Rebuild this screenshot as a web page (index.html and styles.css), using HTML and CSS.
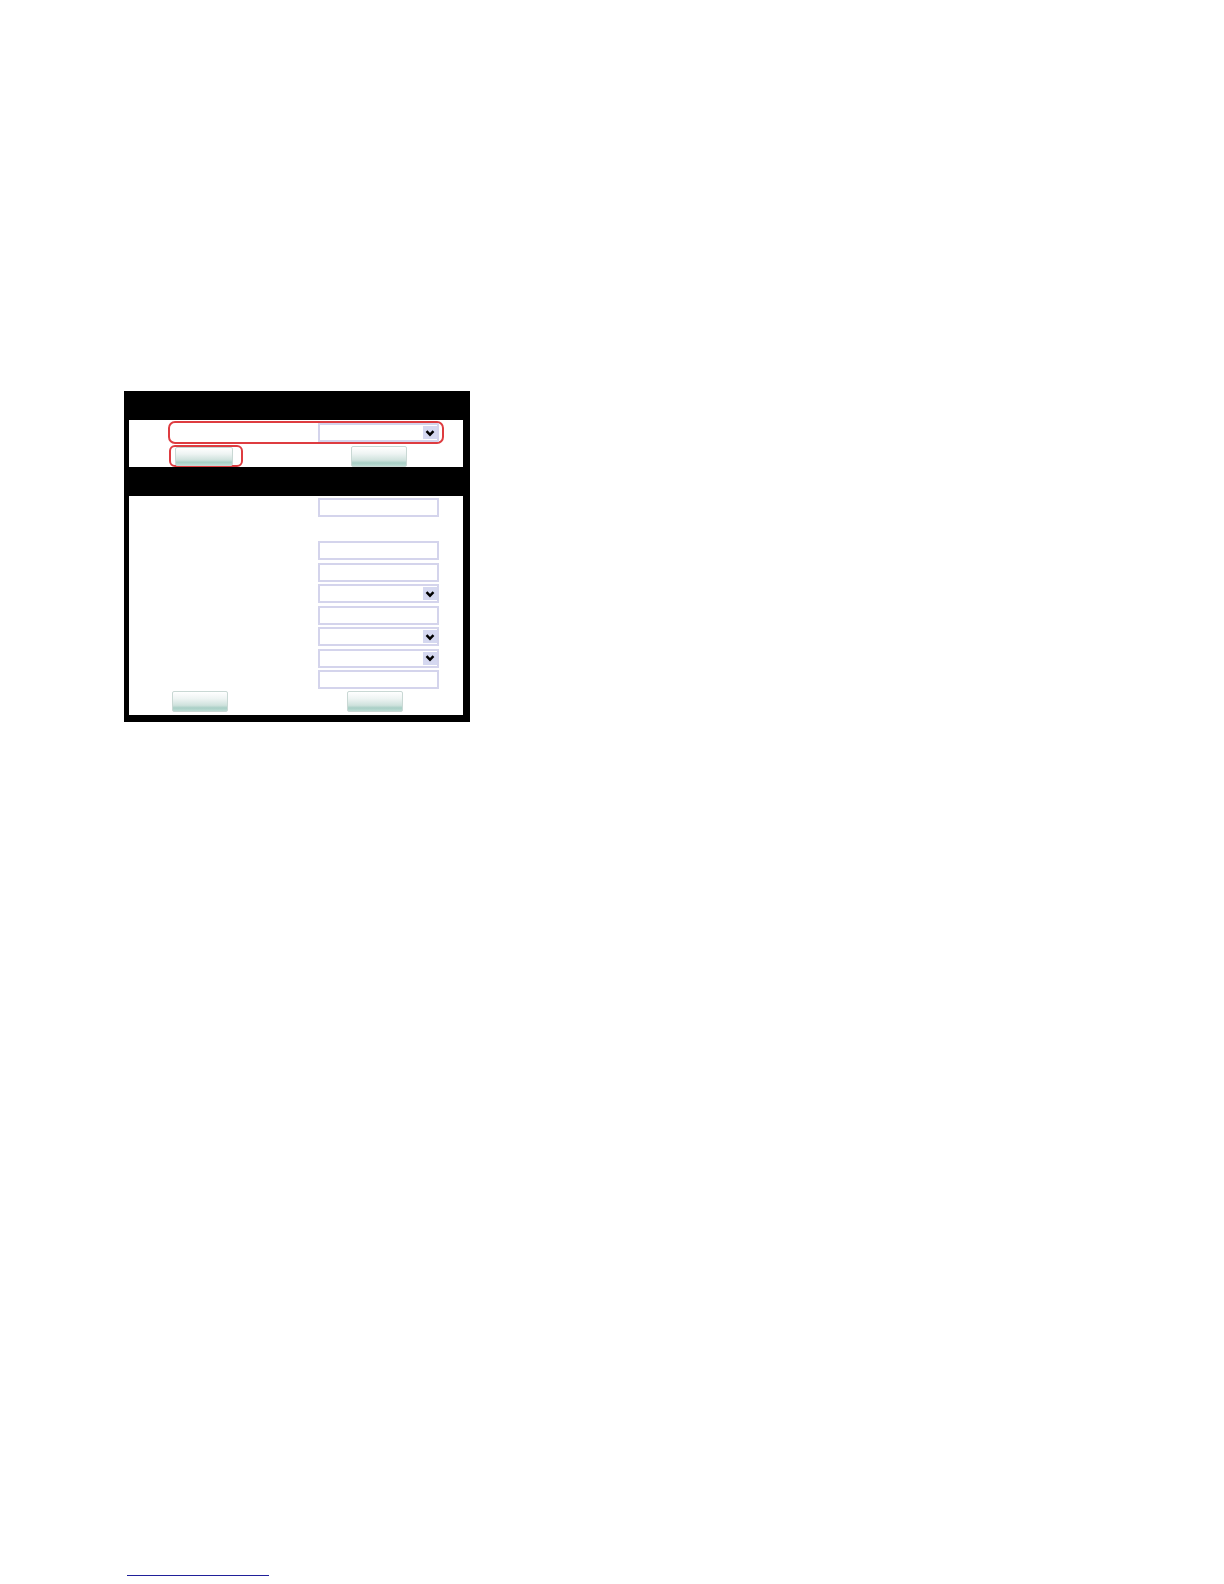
FILE: index.html
```html
<!DOCTYPE html>
<html lang="en">
<head>
<meta charset="utf-8">
<title>Form</title>
<link rel="stylesheet" href="styles.css">
</head>
<body>
<div class="page">
  <div class="panel">
    <div class="panel-head"></div>
    <div class="panel-top">
      <div class="hl-row">
        <div class="select">
          <span class="select-btn"><svg viewBox="0 0 10 10" width="10" height="10"><path d="M1.5 3.2 L5 6.7 L8.5 3.2" fill="none" stroke="#000" stroke-width="2.4"/></svg></span>
        </div>
      </div>
      <div class="btn-row">
        <div class="hl-btn"><button class="btn" type="button"></button></div>
        <button class="btn btn-tall" type="button"></button>
      </div>
    </div>
    <div class="panel-head"></div>
    <div class="panel-body">
      <div class="form-grid">
        <span class="label"></span><input class="field" type="text">
        <span class="label"></span><span class="empty"></span>
        <span class="label"></span><input class="field" type="text">
        <span class="label"></span><input class="field" type="text">
        <span class="label"></span>
        <div class="select"><span class="select-btn"><svg viewBox="0 0 10 10" width="10" height="10"><path d="M1.5 3.2 L5 6.7 L8.5 3.2" fill="none" stroke="#000" stroke-width="2.4"/></svg></span></div>
        <span class="label"></span><input class="field" type="text">
        <span class="label"></span>
        <div class="select"><span class="select-btn"><svg viewBox="0 0 10 10" width="10" height="10"><path d="M1.5 3.2 L5 6.7 L8.5 3.2" fill="none" stroke="#000" stroke-width="2.4"/></svg></span></div>
        <span class="label"></span>
        <div class="select"><span class="select-btn"><svg viewBox="0 0 10 10" width="10" height="10"><path d="M1.5 3.2 L5 6.7 L8.5 3.2" fill="none" stroke="#000" stroke-width="2.4"/></svg></span></div>
        <span class="label"></span><input class="field" type="text">
      </div>
      <div class="foot-row">
        <button class="btn btn-tall" type="button"></button>
        <button class="btn btn-tall" type="button"></button>
      </div>
    </div>
  </div>
  <div class="footnote-rule"></div>
</div>
</body>
</html>
```

FILE: styles.css
```css
html, body {
  margin: 0;
  padding: 0;
  background: #ffffff;
  font-family: "Liberation Sans", Arial, sans-serif;
}

.page {
  padding: 391px 0 0 124px;
  height: 1193px;
}

.panel {
  width: 346px;
  background: #000000;
  padding: 0 7px 7px 5px;
  box-sizing: border-box;
}

.panel-head {
  height: 29px;
}

.panel-top {
  background: #ffffff;
  height: 47px;
  padding-top: 1px;
  box-sizing: border-box;
}

.hl-row {
  margin-left: 39px;
  width: 276px;
  height: 23px;
  border: 2px solid #de3c40;
  border-radius: 7px;
  box-sizing: border-box;
  display: flex;
  justify-content: flex-end;
  align-items: center;
  padding-right: 3px;
}

.select {
  width: 121px;
  height: 19px;
  border: 2px solid #d4d4ec;
  box-sizing: border-box;
  background: #ffffff;
  display: flex;
  justify-content: flex-end;
  align-items: center;
}

.select-btn {
  width: 14px;
  height: 13px;
  background: #d5d8f0;
  display: flex;
  align-items: center;
  justify-content: center;
}

.btn-row {
  display: flex;
  align-items: flex-end;
  margin-left: 40px;
  margin-top: 1px;
  gap: 108px;
}

.hl-btn {
  width: 74px;
  height: 22px;
  border: 2px solid #de3c40;
  border-radius: 6px;
  box-sizing: border-box;
  padding: 0 0 0 4px;
  display: flex;
  align-items: center;
}

.btn {
  display: block;
  width: 58px;
  height: 19px;
  padding: 0;
  margin: 0;
  border: 1px solid #c9d8d4;
  border-radius: 2px;
  box-sizing: border-box;
  background: linear-gradient(#ffffff 0%, #eef4f3 35%, #cfe2dd 70%, #a9cfc6 84%, #bcdcd4 100%);
}

.btn-tall {
  width: 56px;
  height: 21px;
}

.panel-body {
  background: #ffffff;
  height: 219px;
  padding-top: 2px;
  box-sizing: border-box;
}

.form-grid {
  display: grid;
  grid-template-columns: 189px 121px;
  grid-auto-rows: 19px;
  row-gap: 2.5px;
}

.field {
  width: 121px;
  height: 19px;
  margin: 0;
  padding: 0;
  border: 2px solid #d4d4ec;
  box-sizing: border-box;
  background: #ffffff;
  outline: none;
}

.foot-row {
  display: flex;
  margin: 2px 0 0 43px;
  gap: 119px;
}

.footnote-rule {
  width: 142px;
  height: 1px;
  background: #20209a;
  margin: 853px 0 0 3px;
}
```
